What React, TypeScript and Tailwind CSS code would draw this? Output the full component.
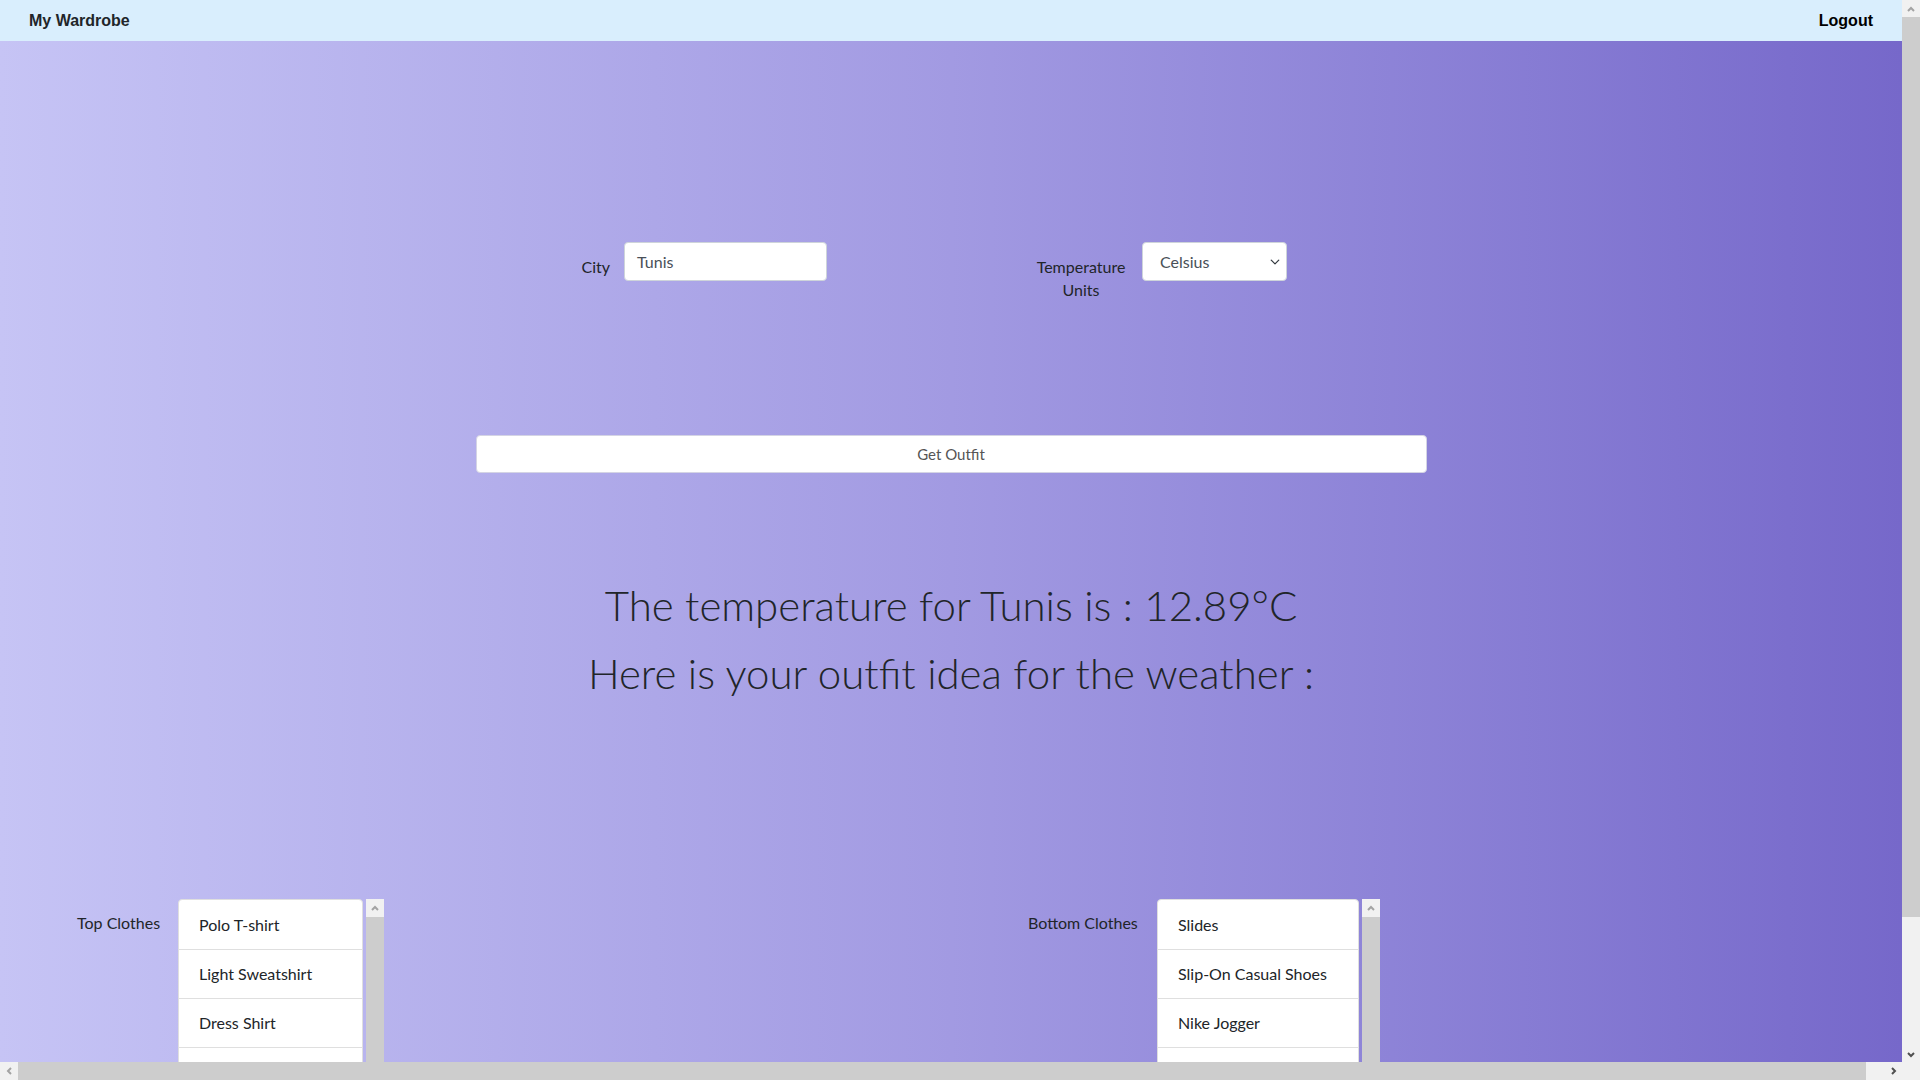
import React from 'react';

const font = { fontFamily: 'Lato, "Noto Sans", sans-serif' };

function Arrow({ dir, dark }: { dir: 'up' | 'down' | 'left' | 'right'; dark?: boolean }) {
  const pts = {
    up: '2,7 5,4 8,7',
    down: '2,4 5,7 8,4',
    left: '7,2 4,5 7,8',
    right: '4,2 7,5 4,8',
  }[dir];
  return (
    <svg width="10" height="10" viewBox="0 0 10 10">
      <polyline points={pts} fill="none" stroke={dark ? '#505050' : '#a3a3a3'} strokeWidth="2" />
    </svg>
  );
}

function ClothesList({
  label,
  items,
  width,
  labelWidth,
}: {
  label: string;
  items: string[];
  width: string;
  labelWidth: string;
}) {
  return (
    <div className="flex items-start pl-[77px]">
      <span className={`${labelWidth} flex-none pt-[12px] text-[16px] leading-[24px] text-[#212529]`}>{label}</span>
      <div className={`flex-none ${width} overflow-hidden rounded-t-[4px] border border-[#dfdfdf] bg-white`}>
        {items.map((item, i) => (
          <div
            key={i}
            className={`h-[49px] flex items-center px-[20px] text-[16px] text-[#212529] ${i > 0 ? 'border-t border-[#dfdfdf]' : ''}`}
          >
            {item}
          </div>
        ))}
      </div>
      <div className="ml-[3px] flex w-[18px] flex-none flex-col self-stretch">
        <div className="flex h-[18px] items-center justify-center bg-[#f1f1f1]">
          <Arrow dir="up" />
        </div>
        <div className="h-[200px] bg-[#cdcdcd]" />
      </div>
    </div>
  );
}

export default function App() {
  return (
    <div className="flex h-[1080px] w-[1920px] flex-col overflow-hidden" style={font}>
      <div className="flex min-h-0 flex-1">
        <div className="flex min-w-0 flex-1 flex-col overflow-hidden">
          <nav
            className="flex h-[41px] flex-none items-center justify-between bg-[#d9eefd] px-[29px] text-[16px] font-bold"
            style={{ fontFamily: '"Liberation Sans", Arial, sans-serif' }}
          >
            <span className="text-[#212529]">My Wardrobe</span>
            <span className="text-black">Logout</span>
          </nav>
          <main className="flex-1 bg-gradient-to-r from-[#c6c4f5] via-[#a29ae2] to-[#7668ca]">
            <div className="mx-auto w-[951px] pt-[201px]">
              <div className="flex h-[39px] items-start">
                <div className="ml-[106px] flex items-start">
                  <label className="pt-[13px] pr-[14px] text-[16px] leading-[24px] text-[#212529]">City</label>
                  <div className="flex h-[39px] w-[203px] items-center rounded-[4px] border border-[#ced4da] bg-white px-[12px] text-[16px] text-[#495057]">
                    Tunis
                  </div>
                </div>
                <div className="ml-[206px] flex items-start">
                  <label className="w-[96px] pt-[13px] text-center text-[16px] leading-[23px] text-[#212529]">
                    Temperature Units
                  </label>
                  <div className="ml-[13px] flex h-[39px] w-[145px] items-center justify-between rounded-[4px] border border-[#ced4da] bg-white pl-[17px] pr-[6px] text-[16px] text-[#495057]">
                    <span>Celsius</span>
                    <svg width="10" height="10" viewBox="0 0 16 16">
                      <path d="M2 5l6 6 6-6" fill="none" stroke="#343a40" strokeWidth="2" strokeLinecap="round" strokeLinejoin="round" />
                    </svg>
                  </div>
                </div>
              </div>
              <button className="mt-[154px] flex h-[38px] w-[951px] items-center justify-center rounded-[4px] border border-[#d4d4e4] bg-white text-[15px] text-[#555]">
                Get Outfit
              </button>
            </div>
            <div className="mt-[98px] text-center text-[42px] font-light leading-[68px] text-[#212529]">
              <p>The temperature for Tunis is : 12.89°C</p>
              <p>Here is your outfit idea for the weather :</p>
            </div>
            <div className="mt-[192px] grid grid-cols-2">
              <ClothesList
                label="Top Clothes"
                labelWidth="w-[101px]"
                width="w-[185px]"
                items={['Polo T-shirt', 'Light Sweatshirt', 'Dress Shirt', '']}
              />
              <ClothesList
                label="Bottom Clothes"
                labelWidth="w-[129px]"
                width="w-[202px]"
                items={['Slides', 'Slip-On Casual Shoes', 'Nike Jogger', '']}
              />
            </div>
          </main>
        </div>
        <div className="flex w-[18px] flex-none flex-col bg-[#f1f1f1]">
          <div className="flex h-[17px] items-center justify-center">
            <Arrow dir="up" />
          </div>
          <div className="h-[900px] bg-[#cdcdcd]" />
          <div className="flex-1" />
          <div className="flex h-[17px] items-center justify-center">
            <Arrow dir="down" dark />
          </div>
        </div>
      </div>
      <div className="flex h-[18px] flex-none bg-[#f1f1f1]">
        <div className="flex w-[18px] items-center justify-center">
          <Arrow dir="left" />
        </div>
        <div className="w-[1848px] bg-[#cdcdcd]" />
        <div className="w-[18px]" />
        <div className="flex w-[18px] items-center justify-center">
          <Arrow dir="right" dark />
        </div>
        <div className="w-[18px]" />
      </div>
    </div>
  );
}
